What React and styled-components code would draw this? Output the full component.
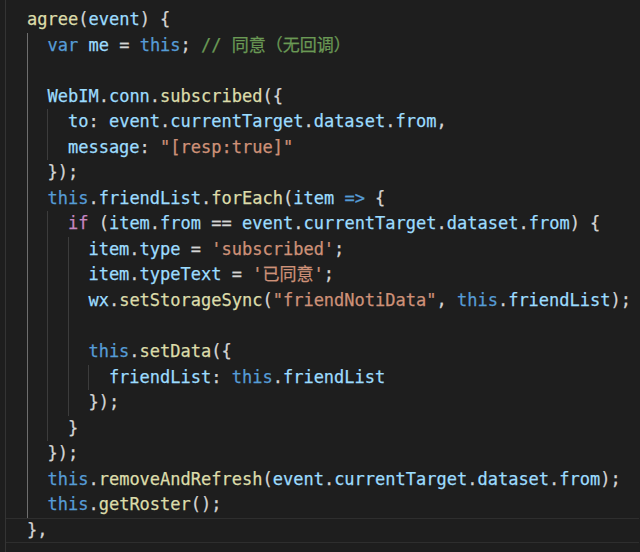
import styled, { createGlobalStyle } from "styled-components";

const colors = {
  bg: "#1e1e1e",
  kw: "#569cd6",
  ctl: "#c586c0",
  fn: "#dcdcaa",
  v: "#9cdcfe",
  str: "#ce9178",
  com: "#6a9955",
  p: "#d4d4d4",
};

const GlobalStyle = createGlobalStyle`
  html, body {
    margin: 0;
    padding: 0;
    background: ${colors.bg};
  }
`;

const Editor = styled.div`
  width: 634px;
  height: 552px;
  margin-left: 5px;
  padding-top: 7px;
  box-sizing: border-box;
  border-left: 1px solid #343434;
  background: ${colors.bg};
  overflow: hidden;
  font-family: "DejaVu Sans Mono", "Noto Sans CJK SC", monospace;
  font-size: 17px;
  -webkit-text-stroke: 0.25px currentColor;
`;

const Line = styled.div`
  display: flex;
  align-items: stretch;
  height: 25.55px;
  line-height: 25.55px;
  padding-left: 21px;
  white-space: pre;
  box-sizing: border-box;
  box-shadow: ${(props) =>
    props.$current ? "inset 0 1px #2e2e2e, inset 0 -1px #2e2e2e" : "none"};
`;

const Guide = styled.span`
  display: inline-block;
  width: 2ch;
  flex: none;
  border-left: 1px solid ${(props) => (props.$active ? "#6e6e6e" : "#3c3c3c")};
  box-sizing: border-box;
`;

const Tok = styled.span`
  color: ${(props) => colors[props.$k]};
`;

// [indent level, tokens]
const lines = [
  [0, [["fn", "agree"], ["p", "("], ["v", "event"], ["p", ") {"]]],
  [1, [["kw", "var"], ["p", " "], ["v", "me"], ["p", " = "], ["kw", "this"], ["p", "; "], ["com", "// 同意（无回调）"]]],
  [1, []],
  [1, [["v", "WebIM"], ["p", "."], ["v", "conn"], ["p", "."], ["fn", "subscribed"], ["p", "({"]]],
  [2, [["v", "to"], ["p", ": "], ["v", "event"], ["p", "."], ["v", "currentTarget"], ["p", "."], ["v", "dataset"], ["p", "."], ["v", "from"], ["p", ","]]],
  [2, [["v", "message"], ["p", ": "], ["str", "\"[resp:true]\""]]],
  [1, [["p", "});"]]],
  [1, [["kw", "this"], ["p", "."], ["v", "friendList"], ["p", "."], ["fn", "forEach"], ["p", "("], ["v", "item"], ["p", " "], ["kw", "=>"], ["p", " {"]]],
  [2, [["ctl", "if"], ["p", " ("], ["v", "item"], ["p", "."], ["v", "from"], ["p", " == "], ["v", "event"], ["p", "."], ["v", "currentTarget"], ["p", "."], ["v", "dataset"], ["p", "."], ["v", "from"], ["p", ") {"]]],
  [3, [["v", "item"], ["p", "."], ["v", "type"], ["p", " = "], ["str", "'subscribed'"], ["p", ";"]]],
  [3, [["v", "item"], ["p", "."], ["v", "typeText"], ["p", " = "], ["str", "'已同意'"], ["p", ";"]]],
  [3, [["v", "wx"], ["p", "."], ["fn", "setStorageSync"], ["p", "("], ["str", "\"friendNotiData\""], ["p", ", "], ["kw", "this"], ["p", "."], ["v", "friendList"], ["p", ");"]]],
  [3, []],
  [3, [["kw", "this"], ["p", "."], ["fn", "setData"], ["p", "({"]]],
  [4, [["v", "friendList"], ["p", ": "], ["kw", "this"], ["p", "."], ["v", "friendList"]]],
  [3, [["p", "});"]]],
  [2, [["p", "}"]]],
  [1, [["p", "});"]]],
  [1, [["kw", "this"], ["p", "."], ["fn", "removeAndRefresh"], ["p", "("], ["v", "event"], ["p", "."], ["v", "currentTarget"], ["p", "."], ["v", "dataset"], ["p", "."], ["v", "from"], ["p", ");"]]],
  [1, [["kw", "this"], ["p", "."], ["fn", "getRoster"], ["p", "();"]]],
  [0, [["p", "},"]]],
];

function App() {
  return (
    <>
      <GlobalStyle />
      <Editor>
        {lines.map(([indent, tokens], i) => (
          <Line key={i} $current={i === lines.length - 1}>
            {Array.from({ length: indent }).map((_, g) => (
              <Guide key={g} $active={g === 0} />
            ))}
            {tokens.map(([k, text], j) => (
              <Tok key={j} $k={k}>
                {text}
              </Tok>
            ))}
          </Line>
        ))}
      </Editor>
    </>
  );
}

export default App;
